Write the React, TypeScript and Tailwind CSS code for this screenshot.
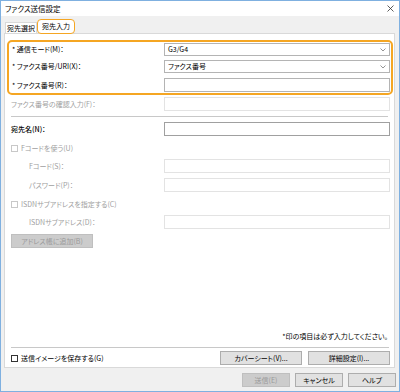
import React from 'react';

const font = "font-['Noto_Sans_CJK_JP','Noto_Sans',sans-serif] [font-feature-settings:'palt']";

const Chevron = () => (
  <svg width="6" height="4" viewBox="0 0 6 4" className="shrink-0">
    <polyline points="0.5,0.5 3,3 5.5,0.5" fill="none" stroke="#7a7a7a" strokeWidth="0.8" />
  </svg>
);

const Input = ({ disabled, strong, children, select, h = 'h-[14px]' }: { disabled?: boolean; strong?: boolean; children?: React.ReactNode; select?: boolean; h?: string }) => (
  <div
    className={`w-[226px] ${h} flex items-center justify-between px-[3px] bg-white border ${
      disabled ? 'border-[#e3e3e3]' : strong ? 'border-[#a0a0a0]' : 'border-[#b4b4b4]'
    }`}
  >
    <span className="text-[7px] leading-none text-black">{children}</span>
    {select && <Chevron />}
  </div>
);

const Check = ({ disabled, label }: { disabled?: boolean; label: string }) => (
  <div className="h-[12px] flex items-center pl-[6px] gap-[3px]">
    <div className={`w-[7px] h-[7px] bg-white border ${disabled ? 'border-[#c8c8c8]' : 'border-[#333333]'}`} />
    <span className={`text-[7px] leading-none ${disabled ? 'text-[#a0a0a0]' : 'text-black'}`}>{label}</span>
  </div>
);

const Row = ({ label, gray, indent, children, bold }: { label: string; gray?: boolean; indent?: boolean; children: React.ReactNode; bold?: boolean }) => (
  <div className="flex items-center justify-between pr-[4px]">
    <span
      className={`text-[7px] leading-none ${indent ? 'pl-[24px]' : 'pl-[6px]'} ${gray ? 'text-[#a0a0a0]' : 'text-black'} ${
        bold ? 'font-medium' : ''
      }`}
    >
      {label}
    </span>
    {children}
  </div>
);

const Btn = ({ label, w, disabled }: { label: string; w: string; disabled?: boolean }) => (
  <div
    className={`${w} h-[14px] flex items-center justify-center border text-[7px] leading-none ${
      disabled ? 'bg-[#cccccc] border-[#bfbfbf] text-[#9a9a9a]' : 'bg-[#e1e1e1] border-[#adadad] text-black'
    }`}
  >
    {label}
  </div>
);

export default function App() {
  return (
    <div className={`w-[400px] h-[392px] border border-[#7fb0e0] bg-[#f0f0f0] flex flex-col ${font}`}>
      {/* Title bar */}
      <div className="h-[15px] bg-white flex items-center justify-between pl-[4px] pr-[5px]">
        <span className="text-[7.5px] leading-none text-black">ファクス送信設定</span>
        <svg width="7" height="7" viewBox="0 0 7 7">
          <path d="M0.5 0.5 L6.5 6.5 M6.5 0.5 L0.5 6.5" stroke="#333" strokeWidth="0.8" />
        </svg>
      </div>

      {/* Tabs */}
      <div className="h-[17px] flex items-end pl-[4px]">
        <div className="h-[11px] w-[32px] bg-white border border-b-0 border-[#d9d9d9] flex items-center justify-center text-[7px] leading-none text-black">
          宛先選択
        </div>
        <div className="relative z-10 -mb-[1px] h-[15px] w-[38px] bg-white border-[1.5px] border-[#f5a623] rounded-[4px] flex items-center justify-center text-[7px] leading-none text-black">
          宛先入力
        </div>
      </div>

      {/* Panel */}
      <div className="ml-[3px] w-[391px] h-[335px] bg-white border border-[#d9d9d9] flex flex-col">
        <div className="mt-[6px] ml-[2px] mr-[1px] h-[55px] border-[2px] border-[#f5a623] rounded-[5px] flex flex-col pt-[1px] pl-[3px] pr-[1px]">
          <div className="flex items-center justify-between">
            <span className="text-[7px] leading-none text-black">* 通信モード(M)：</span>
            <Input select h="h-[13px]">G3/G4</Input>
          </div>
          <div className="mt-[4px] flex items-center justify-between">
            <span className="text-[7px] leading-none text-black">* ファクス番号/URI(X)：</span>
            <Input select h="h-[13px]">ファクス番号</Input>
          </div>
          <div className="mt-[5px] flex items-center justify-between">
            <span className="text-[7px] leading-none text-black">* ファクス番号(R)：</span>
            <Input h="h-[14px]" />
          </div>
        </div>

        <div className="mt-[2px]">
          <Row label="ファクス番号の確認入力(F)：" gray>
            <Input disabled />
          </Row>
        </div>

        <div className="mt-[5px] ml-[6px] mr-[6px] h-px bg-[#c8c8c8]" />

        <div className="mt-[5px]">
          <Row label="宛先名(N)：" bold>
            <Input strong />
          </Row>
        </div>

        <div className="mt-[6px]">
          <Check disabled label="Fコードを使う(U)" />
        </div>
        <div className="mt-[5px]">
          <Row label="Fコード(S)：" gray indent>
            <Input disabled />
          </Row>
        </div>
        <div className="mt-[5px]">
          <Row label="パスワード(P)：" gray indent>
            <Input disabled />
          </Row>
        </div>
        <div className="mt-[6px]">
          <Check disabled label="ISDNサブアドレスを指定する(C)" />
        </div>
        <div className="mt-[5px]">
          <Row label="ISDNサブアドレス(D)：" gray indent>
            <Input disabled />
          </Row>
        </div>
        <div className="mt-[5px] pl-[6px]">
          <Btn label="アドレス帳に追加(B)" w="w-[82px]" disabled />
        </div>

        <div className="flex-1" />

        <div className="h-[10px] flex items-center justify-end pr-[6px]">
          <span className="text-[7px] leading-none text-black">*印の項目は必ず入力してください。</span>
        </div>
        <div className="mt-[6px] ml-[6px] mr-[5px] h-px bg-[#c8c8c8]" />
        <div className="mt-[3px] mb-[2px] flex items-center justify-between pr-[4px]">
          <Check label="送信イメージを保存する(G)" />
          <div className="flex gap-[6px]">
            <Btn label="カバーシート(V)..." w="w-[82px]" />
            <Btn label="詳細設定(I)..." w="w-[82px]" />
          </div>
        </div>
      </div>

      {/* Bottom buttons */}
      <div className="mt-[5px] flex justify-end gap-[5px] pr-[3px]">
        <Btn label="送信(E)" w="w-[48px]" disabled />
        <Btn label="キャンセル" w="w-[48px]" />
        <Btn label="ヘルプ" w="w-[48px]" />
      </div>
    </div>
  );
}
